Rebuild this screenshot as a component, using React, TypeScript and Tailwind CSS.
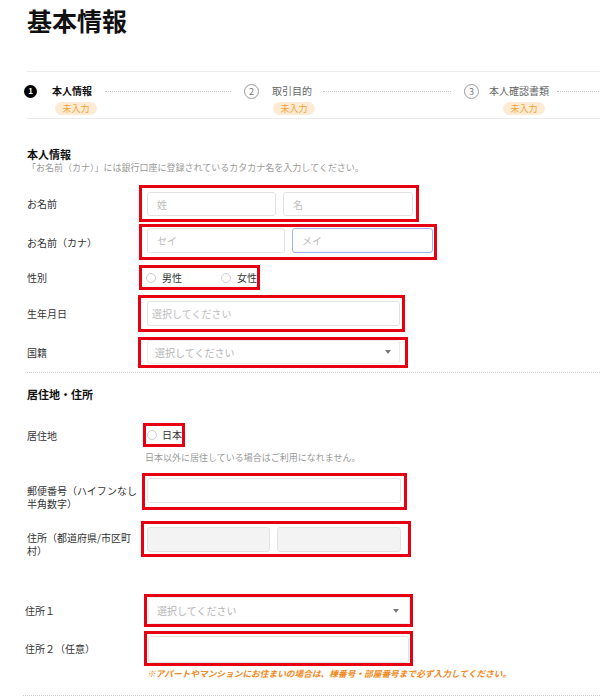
import React from "react"

const FONT = "font-['Noto_Sans_CJK_JP','Noto_Sans',sans-serif]"

function Field({ className = "", text = "", gray = false, blue = false }: { className?: string; text?: string; gray?: boolean; blue?: boolean }) {
  return (
    <div
      className={`flex items-center rounded-[3px] border text-[10px] text-[#bdbdbd] ${
        blue ? "border-[#9db5ee]" : "border-[#e3e3e3]"
      } ${gray ? "bg-[#f3f3f3]" : "bg-white"} ${className}`}
    >
      {text}
    </div>
  )
}

function SelectBox({ className = "" }: { className?: string }) {
  return (
    <div className={`flex items-center justify-between rounded-[3px] border border-[#ececec] bg-white text-[10px] text-[#b5b5b5] ${className}`}>
      <span>選択してください</span>
      <span className="h-0 w-0 border-x-[3.5px] border-t-[4px] border-x-transparent border-t-[#7a7a7a]" />
    </div>
  )
}

function Radio({ label }: { label: string }) {
  return (
    <div className="flex items-center">
      <span className="h-[10px] w-[10px] rounded-full border border-[#cfcfcf]" />
      <span className="ml-[6px] text-[10px] text-[#333]">{label}</span>
    </div>
  )
}

function Step({ num, label, active = false, badgeShift = "ml-[8px]" }: { num: number; label: string; active?: boolean; badgeShift?: string }) {
  return (
    <div className="flex w-[220px] shrink-0 items-start">
      <div className="flex h-[14px] items-center">
        {active ? (
          <span className="flex h-[13px] w-[13px] items-center justify-center rounded-full bg-black text-[8px] font-bold leading-none text-white">
            {num}
          </span>
        ) : (
          <span className="flex h-[15px] w-[15px] items-center justify-center rounded-full border border-[#9a9a9a] text-[9px] leading-none text-[#777]">
            {num}
          </span>
        )}
      </div>
      <div className="ml-[10px] flex flex-col items-center">
        <span className={`h-[14px] text-[10px] leading-[14px] ${active ? "font-bold text-[#111]" : "text-[#666]"}`}>{label}</span>
        <span className={`mt-[4px] flex h-[13px] w-[42px] items-center justify-center rounded-full bg-[#fdebd3] text-[9px] leading-none text-[#f2a33a] ${badgeShift}`}>
          未入力
        </span>
      </div>
      <div className="ml-[8px] mr-[13px] mt-[7px] flex-1 border-t border-dotted border-[#c8c8c8]" />
    </div>
  )
}

export default function App() {
  return (
    <div className={`h-[699px] w-[600px] overflow-hidden bg-white text-[#333] ${FONT}`}>
      <h1 className="pl-[27px] pt-[8px] text-[25px] font-bold leading-none text-[#111]">基本情報</h1>

      {/* stepper */}
      <div className="ml-[27px] mt-[38px] border-t border-[#ebebeb]" />
      <div className="flex h-[46px] pl-[24px] pt-[12px]">
        <Step num={1} label="本人情報" active />
        <Step num={2} label="取引目的" badgeShift="ml-[4px]" />
        <Step num={3} label="本人確認書類" badgeShift="ml-[10px]" />
      </div>
      <div className="ml-[27px] border-t border-[#ebebeb]" />

      {/* 本人情報 */}
      <div className="pl-[27px] pt-[29px]">
        <h2 className="text-[11px] font-bold leading-[13px] text-[#111]">本人情報</h2>
        <p className="mt-[1px] text-[9px] leading-[12px] text-[#9a9a9a]">「お名前（カナ）」には銀行口座に登録されているカタカナ名を入力してください。</p>
      </div>

      <div className="mt-[11px] flex items-center">
        <div className="w-[138px] shrink-0 pl-[27px] text-[10px]">お名前</div>
        <div className="ml-[1px] flex w-[280px] border-[3px] border-[#e60012] pb-[3px] pl-[5px] pr-[3px] pt-[4px]">
          <Field className="h-[24px] w-[129px] pl-[9px]" text="姓" />
          <Field className="ml-[7px] h-[24px] w-[130px] pl-[9px]" text="名" />
        </div>
      </div>

      <div className="mt-[2px] flex items-center">
        <div className="w-[138px] shrink-0 pl-[27px] text-[10px]">お名前（カナ）</div>
        <div className="ml-[1px] flex w-[298px] border-[3px] border-[#e60012] pb-[4px] pl-[5px] pr-[1px] pt-[1px]">
          <Field className="h-[25px] w-[138px] pl-[9px]" text="セイ" />
          <Field className="ml-[7px] h-[25px] w-[141px] pl-[9px]" text="メイ" blue />
        </div>
      </div>

      <div className="mt-[5px] flex items-center">
        <div className="w-[138px] shrink-0 pl-[27px] text-[10px]">性別</div>
        <div className="ml-[1px] flex h-[25px] w-[121px] items-center border-[3px] border-[#e60012] pl-[4px]">
          <Radio label="男性" />
          <div className="ml-[39px]">
            <Radio label="女性" />
          </div>
        </div>
      </div>

      <div className="mt-[5px] flex items-center">
        <div className="w-[138px] shrink-0 pl-[27px] text-[10px]">生年月日</div>
        <div className="w-[267px] border-[3px] border-[#e60012] py-[3px] pl-[6px] pr-[2px]">
          <Field className="h-[25px] w-[253px] pl-[4px]" text="選択してください" />
        </div>
      </div>

      <div className="mt-[5px] flex items-center">
        <div className="w-[138px] shrink-0 pl-[27px] text-[10px]">国籍</div>
        <div className="w-[270px] border-[3px] border-[#e60012] pb-[1px] pl-[6px] pr-[5px]">
          <SelectBox className="h-[24px] w-[253px] pl-[7px] pr-[8px]" />
        </div>
      </div>

      <div className="ml-[27px] mt-[4px] border-t border-dotted border-[#cfcfcf]" />

      {/* 居住地・住所 */}
      <h2 className="mt-[14px] pl-[27px] text-[11px] font-bold leading-[14px] text-[#111]">居住地・住所</h2>

      <div className="mt-[22px] flex items-center">
        <div className="w-[138px] shrink-0 pl-[27px] text-[10px]">居住地</div>
        <div className="ml-[5px] flex h-[24px] w-[42px] items-center border-[3px] border-[#e60012] pl-[1px]">
          <span className="h-[10px] w-[10px] shrink-0 rounded-full border border-[#cfcfcf]" />
          <span className="ml-[5px] text-[10px] leading-none">日本</span>
        </div>
      </div>
      <p className="mt-[5px] pl-[145px] text-[9px] leading-[12px] text-[#9a9a9a]">日本以外に居住している場合はご利用になれません。</p>

      <div className="mt-[9px] flex items-start">
        <div className="mt-[11px] w-[138px] shrink-0 pl-[27px] text-[10px] leading-[13px]">郵便番号（ハイフンなし半角数字）</div>
        <div className="ml-[4px] w-[265px] border-[3px] border-[#e60012] pb-[4px] pl-[2px] pr-[3px] pt-[2px]">
          <Field className="h-[25px] w-[254px]" />
        </div>
      </div>

      <div className="mt-[11px] flex items-start">
        <div className="mt-[10px] w-[138px] shrink-0 pl-[27px] text-[10px] leading-[13px]">住所（都道府県/市区町村）</div>
        <div className="ml-[3px] flex w-[270px] border-[3px] border-[#e60012] pb-[2px] pl-[3px] pr-[7px] pt-[3px]">
          <Field className="h-[25px] w-[123px]" gray />
          <Field className="ml-[7px] h-[25px] w-[124px]" gray />
        </div>
      </div>

      <div className="mt-[37px] flex items-center">
        <div className="w-[138px] shrink-0 pl-[25px] text-[10px]">住所１</div>
        <div className="ml-[6px] w-[269px] border-[3px] border-[#e60012] pl-[1px]">
          <SelectBox className="h-[27px] w-[262px] pl-[8px] pr-[10px]" />
        </div>
      </div>

      <div className="mt-[4px] flex items-center">
        <div className="w-[138px] shrink-0 pl-[25px] text-[10px]">住所２（任意）</div>
        <div className="ml-[6px] w-[269px] border-[3px] border-[#e60012] pl-[1px] pr-[1px] pt-[2px]">
          <Field className="h-[27px] w-[261px]" />
        </div>
      </div>
      <p className="mt-[2px] pl-[147px] text-[8.7px] font-bold italic leading-[12px] text-[#f08a24]">
        ※アパートやマンションにお住まいの場合は、棟番号・部屋番号まで必ず入力してください。
      </p>

      <div className="ml-[23px] mt-[15px] border-t border-dotted border-[#cfcfcf]" />
    </div>
  )
}
